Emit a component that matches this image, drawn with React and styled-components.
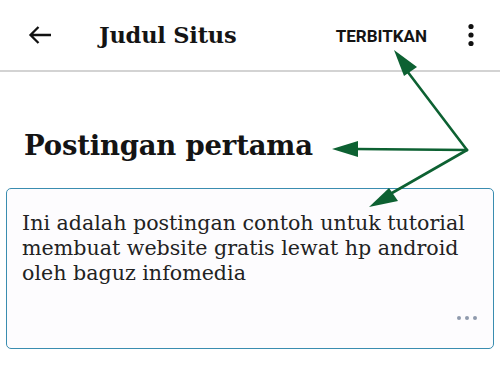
import React from "react";
import styled, { createGlobalStyle } from "styled-components";

const GlobalStyle = createGlobalStyle`
  html, body {
    margin: 0;
    padding: 0;
    background: #ffffff;
  }
  body {
    width: 500px;
    height: 367px;
    overflow: hidden;
    font-family: "DejaVu Serif", "Liberation Serif", serif;
  }
`;

const Page = styled.div`
  position: relative;
  width: 500px;
  height: 367px;
  background: #ffffff;
`;

const Toolbar = styled.div`
  display: flex;
  align-items: center;
  height: 70px;
  padding: 0 24px 0 26px;
  border-bottom: 2px solid #d3d3d3;
`;

const IconButton = styled.div`
  display: flex;
  align-items: center;
  justify-content: center;
  width: ${(p) => p.w || 28}px;
  height: 28px;
`;

const Title = styled.div`
  margin-left: 45px;
  flex: 1;
  font-family: "DejaVu Serif", serif;
  font-weight: 700;
  font-size: 22.5px;
  color: #141414;
  letter-spacing: -0.2px;
`;

const Action = styled.div`
  font-family: Roboto, "Liberation Sans", sans-serif;
  font-weight: 700;
  font-size: 17px;
  color: #141414;
  margin-right: 39px;
  padding-top: 2px;
`;

const Body = styled.div`
  padding: 56px 6px 0 6px;
`;

const Heading = styled.h1`
  margin: 0 0 26px 18px;
  font-family: "DejaVu Serif", serif;
  font-weight: 700;
  font-size: 27.5px;
  line-height: 34px;
  color: #141414;
  letter-spacing: -0.2px;
`;

const Card = styled.div`
  position: relative;
  height: 161px;
  border: 1.5px solid #3a8db0;
  border-radius: 5px;
  background: #fdfcfe;
  padding: 22px 18px 0 15px;
  box-sizing: border-box;
`;

const CardText = styled.p`
  margin: 0;
  font-family: "DejaVu Serif", serif;
  font-size: 20.6px;
  line-height: 25px;
  color: #222222;
`;

const More = styled.div`
  position: absolute;
  right: 16px;
  bottom: 28px;
  display: flex;
  gap: 4px;
`;

const Dot = styled.span`
  width: 4px;
  height: 4px;
  border-radius: 50%;
  background: #8f9aad;
`;

const Annotations = styled.svg`
  position: absolute;
  left: 0;
  top: 0;
  pointer-events: none;
`;

const green = "#0d6132";

export default function App() {
  return (
    <Page>
      <GlobalStyle />
      <Toolbar>
        <IconButton>
          <svg width="26" height="24" viewBox="0 0 26 24">
            <path d="M24 12H3.5M11.5 4l-8 8 8 8" fill="none" stroke="#111" strokeWidth="2.3" />
          </svg>
        </IconButton>
        <Title>Judul Situs</Title>
        <Action>TERBITKAN</Action>
        <IconButton w={10}>
          <svg width="8" height="24" viewBox="0 0 8 24">
            <circle cx="4" cy="3.5" r="2.6" fill="#111" />
            <circle cx="4" cy="12" r="2.6" fill="#111" />
            <circle cx="4" cy="20.5" r="2.6" fill="#111" />
          </svg>
        </IconButton>
      </Toolbar>
      <Body>
        <Heading>Postingan pertama</Heading>
        <Card>
          <CardText>
            Ini adalah postingan contoh untuk tutorial membuat website gratis lewat hp android oleh baguz infomedia
          </CardText>
          <More>
            <Dot />
            <Dot />
            <Dot />
          </More>
        </Card>
      </Body>
      <Annotations width="500" height="367" viewBox="0 0 500 367">
        <g stroke={green} strokeWidth="2.6" fill="none" strokeLinecap="round">
          <line x1="467" y1="150" x2="404" y2="67" />
          <line x1="467" y1="150" x2="355" y2="149" />
          <line x1="467" y1="150" x2="385" y2="197" />
        </g>
        <g fill={green}>
          <polygon points="394,50 417,67 404,76" />
          <polygon points="332,149 358,141 358,157" />
          <polygon points="369,207 389,188 398,201" />
        </g>
      </Annotations>
    </Page>
  );
}
